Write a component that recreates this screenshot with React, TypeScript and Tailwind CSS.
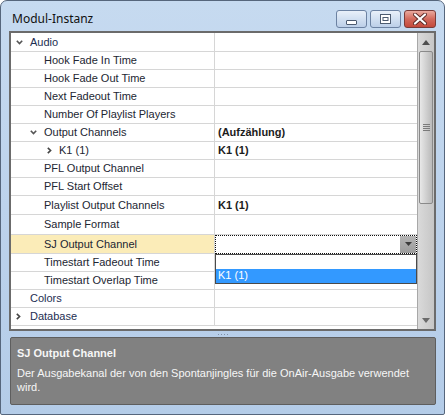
import React from "react";

type Row = {
  label: string;
  lvl: 0 | 1 | 2;
  h: string;
  chev?: "down" | "right";
  value?: string;
  selected?: boolean;
};

const rows: Row[] = [
  { label: "Audio", lvl: 0, h: "h-[19px]", chev: "down" },
  { label: "Hook Fade In Time", lvl: 1, h: "h-[18px]" },
  { label: "Hook Fade Out Time", lvl: 1, h: "h-[18px]" },
  { label: "Next Fadeout Time", lvl: 1, h: "h-[18px]" },
  { label: "Number Of Playlist Players", lvl: 1, h: "h-[18px]" },
  { label: "Output Channels", lvl: 1, h: "h-[18px]", chev: "down", value: "(Aufzählung)" },
  { label: "K1 (1)", lvl: 2, h: "h-[18px]", chev: "right", value: "K1 (1)" },
  { label: "PFL Output Channel", lvl: 1, h: "h-[18px]" },
  { label: "PFL Start Offset", lvl: 1, h: "h-[18px]" },
  { label: "Playlist Output Channels", lvl: 1, h: "h-[19px]", value: "K1 (1)" },
  { label: "Sample Format", lvl: 1, h: "h-[20px]" },
  { label: "SJ Output Channel", lvl: 1, h: "h-[19px]", selected: true },
  { label: "Timestart Fadeout Time", lvl: 1, h: "h-[18px]" },
  { label: "Timestart Overlap Time", lvl: 1, h: "h-[18px]" },
  { label: "Colors", lvl: 0, h: "h-[18px]" },
  { label: "Database", lvl: 0, h: "h-[18px]", chev: "right" },
];

const slot = ["w-[19px] pl-[5px]", "w-[33px] pl-[19px]", "w-[48px] pl-[36px]"];

function Chevron({ dir }: { dir: "down" | "right" }) {
  if (dir === "down")
    return (
      <svg width="7" height="5" viewBox="0 0 7 5">
        <path d="M0.8 0.8 L3.5 3.6 L6.2 0.8" fill="none" stroke="#555" strokeWidth="1.6" />
      </svg>
    );
  return (
    <svg width="5" height="7" viewBox="0 0 5 7">
      <path d="M0.8 0.8 L3.6 3.5 L0.8 6.2" fill="none" stroke="#444" strokeWidth="1.6" />
    </svg>
  );
}

function SjEditor() {
  return (
    <div className="relative flex h-[19px] w-full">
      <div className="flex flex-1 border border-dotted border-[#111] bg-white">
        <div className="flex-1" />
        <div className="flex w-[16px] items-center justify-center bg-linear-to-b from-[#b4b4b4] to-[#9c9c9c]">
          <svg width="7" height="4" viewBox="0 0 7 4">
            <path d="M0 0 H7 L3.5 4 Z" fill="#3c3c3c" />
          </svg>
        </div>
      </div>
      <div className="absolute left-0 right-0 top-full z-10 border border-[#4a4a4a] bg-white font-normal">
        <div className="h-[14px]" />
        <div className="flex h-[14px] items-center bg-[#3399ff] pl-[2px] text-white">K1 (1)</div>
      </div>
    </div>
  );
}

function PropRow({ r }: { r: Row }) {
  return (
    <div className={`flex border-b border-[#d6d6d6] ${r.h}`}>
      <div
        className={`flex w-[204px] shrink-0 items-center border-r border-[#d6d6d6] ${
          r.selected ? "bg-[#fbecb8]" : ""
        } ${r.lvl === 0 ? "text-[#1d2e52]" : "text-[#222632]"}`}
      >
        <span className={`flex shrink-0 items-center ${slot[r.lvl]}`}>
          {r.chev && <Chevron dir={r.chev} />}
        </span>
        <span className="whitespace-nowrap">{r.label}</span>
      </div>
      <div className="relative flex min-w-0 flex-1 items-center">
        {r.selected ? (
          <SjEditor />
        ) : (
          <span className="pl-[3px] font-bold text-[#1c1c1c]">{r.value}</span>
        )}
      </div>
    </div>
  );
}

function Scrollbar() {
  return (
    <div className="flex flex-1 flex-col border-l border-[#a8a8a8] bg-linear-to-r from-[#dadada] to-[#c6c6c6]">
      <div className="flex h-[18px] items-center justify-center">
        <svg width="8" height="5" viewBox="0 0 8 5">
          <path d="M0 5 H8 L4 0 Z" fill="#4e4e4e" />
        </svg>
      </div>
      <div className="mx-[1px] flex h-[153px] items-center justify-center rounded-[2px] border border-[#8a8a8a] bg-linear-to-r from-[#e8e8e8] to-[#bababa]">
        <div className="flex w-[7px] flex-col gap-[1px]">
          <div className="h-px bg-[#7a7a7a]" />
          <div className="h-px bg-[#7a7a7a]" />
          <div className="h-px bg-[#7a7a7a]" />
          <div className="h-px bg-[#7a7a7a]" />
        </div>
      </div>
      <div className="flex-1" />
      <div className="flex h-[18px] items-center justify-center">
        <svg width="8" height="5" viewBox="0 0 8 5">
          <path d="M0 0 H8 L4 5 Z" fill="#6a6a6a" />
        </svg>
      </div>
    </div>
  );
}

function CaptionButtons() {
  const blue =
    "flex h-[18px] items-center justify-center rounded-[3px] border border-[#6c82a2] bg-linear-to-b from-[#e9f0f9] via-[#d2e0f1] to-[#bccfe8]";
  return (
    <div className="mt-[9px] flex gap-[3px]">
      <div className={`${blue} w-[31px]`}>
        <svg width="11" height="5" viewBox="0 0 11 5" className="mt-[6px]">
          <rect x="0.5" y="0.5" width="10" height="4" rx="0.5" fill="#fff" stroke="#4c5b70" />
        </svg>
      </div>
      <div className={`${blue} w-[31px]`}>
        <svg width="11" height="10" viewBox="0 0 11 10">
          <rect x="0.5" y="0.5" width="10" height="9" fill="#fff" stroke="#4c5b70" />
          <rect x="3" y="3.5" width="5" height="3" fill="none" stroke="#4c5b70" />
        </svg>
      </div>
      <div className="flex h-[18px] w-[32px] items-center justify-center rounded-[3px] border border-[#7a3c38] bg-linear-to-b from-[#e9a99e] via-[#d2695c] to-[#c44a3c]">
        <svg width="14" height="12" viewBox="0 0 14 12">
          <path d="M2 1.5 L12 10.5 M12 1.5 L2 10.5" stroke="#5b2a26" strokeWidth="4" strokeLinecap="round" />
          <path d="M2 1.5 L12 10.5 M12 1.5 L2 10.5" stroke="#fff" strokeWidth="2.2" strokeLinecap="round" />
        </svg>
      </div>
    </div>
  );
}

export default function App() {
  return (
    <div className="h-[416px] w-[445px] bg-white font-['Liberation_Sans',Arial,sans-serif] text-[11px]">
      <div className="flex h-[415px] flex-col rounded-t-[7px] rounded-b-[2px] border border-[#56667c] bg-linear-to-b from-[#c6daf0] to-[#b4cce8]">
        <div className="flex h-[30px] shrink-0 items-start justify-between pl-[11px] pr-[8px]">
          <span className="mt-[10px] font-['Noto_Sans',sans-serif] text-[12px] leading-[16px] text-[#111]">
            Modul-Instanz
          </span>
          <CaptionButtons />
        </div>

        <div className="px-[8px]">
          <div className="flex h-[300px] border-2 border-[#6b6b6b] bg-white">
            <div className="w-[406px] shrink-0">
              {rows.map((r) => (
                <PropRow key={r.label + r.lvl} r={r} />
              ))}
            </div>
            <Scrollbar />
          </div>
        </div>

        <div className="flex h-[6px] shrink-0 items-center justify-center gap-[2px] pl-[1px]">
          <div className="h-px w-px bg-[#7f90a6]" />
          <div className="h-px w-px bg-[#7f90a6]" />
          <div className="h-px w-px bg-[#7f90a6]" />
          <div className="h-px w-px bg-[#7f90a6]" />
        </div>

        <div className="ml-[9px] mr-[8px] h-[68px] shrink-0 rounded-[2px] border border-[#5e5e5e] bg-[#818181] pl-[6px] pt-[8px] text-[#f6f6f6]">
          <div className="font-bold leading-[14px]">SJ Output Channel</div>
          <div className="mt-[6px] leading-[14px]">
            Der Ausgabekanal der von den Spontanjingles für die OnAir-Ausgabe verwendet
            <br />
            wird.
          </div>
        </div>
      </div>
    </div>
  );
}
